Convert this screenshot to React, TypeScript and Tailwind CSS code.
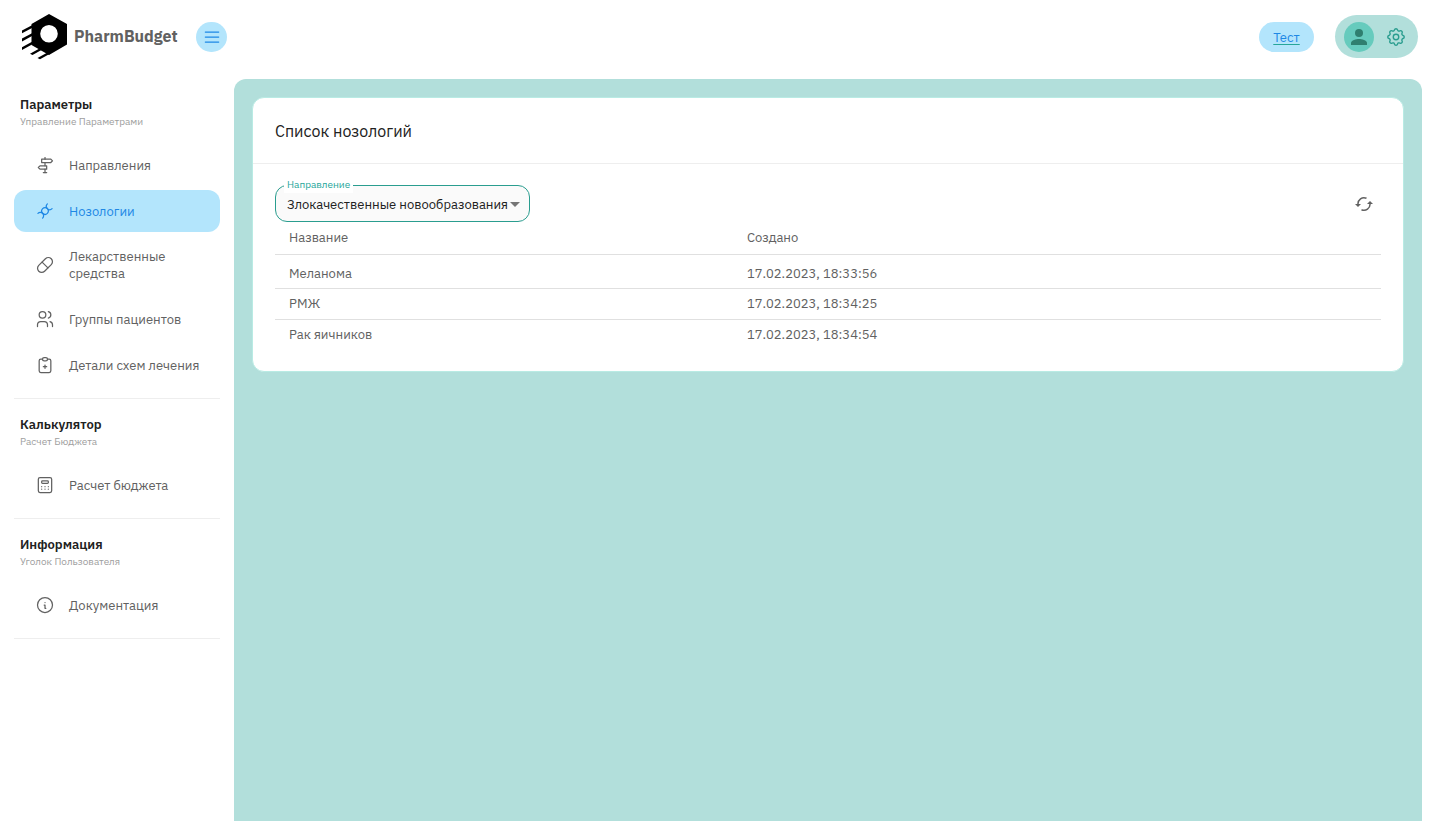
import React from 'react';
import {
    TbDirections,
    TbDna,
    TbPill,
    TbUsers,
    TbClipboardPlus,
    TbCalculator,
    TbInfoCircle,
    TbMenu2,
    TbSettings,
} from 'react-icons/tb';

type IconType = React.ComponentType<{className?: string; strokeWidth?: number}>;

interface NavItem {
    label: string;
    icon: IconType;
    active?: boolean;
}

interface NavGroup {
    title: string;
    caption: string;
    items: NavItem[];
}

const NAV_GROUPS: NavGroup[] = [
    {
        title: 'Параметры',
        caption: 'Управление Параметрами',
        items: [
            {label: 'Направления', icon: TbDirections},
            {label: 'Нозологии', icon: TbDna, active: true},
            {label: 'Лекарственные средства', icon: TbPill},
            {label: 'Группы пациентов', icon: TbUsers},
            {label: 'Детали схем лечения', icon: TbClipboardPlus},
        ],
    },
    {
        title: 'Калькулятор',
        caption: 'Расчет Бюджета',
        items: [{label: 'Расчет бюджета', icon: TbCalculator}],
    },
    {
        title: 'Информация',
        caption: 'Уголок Пользователя',
        items: [{label: 'Документация', icon: TbInfoCircle}],
    },
];

const ROWS = [
    {name: 'Меланома', created: '17.02.2023, 18:33:56'},
    {name: 'РМЖ', created: '17.02.2023, 18:34:25'},
    {name: 'Рак яичников', created: '17.02.2023, 18:34:54'},
];

function Logo() {
    return (
        <svg viewBox="0 0 46 46" className="h-[46px] w-[46px] shrink-0" fill="#000">
            <path fillRule="evenodd" d="M27 0 L45 10 V30.5 L27 41 L9.5 31 V10 Z M27 11 a8.8 8.8 0 1 0 0 17.6 a8.8 8.8 0 1 0 0 -17.6 Z"/>
            <path d="M0 16.4 L10 11.2 V13.9 L0 19.2 Z"/>
            <path d="M0 24.6 L10 19.2 V22 L0 27.4 Z"/>
            <path d="M0 33.2 L10 27.8 V30.6 L0 36 Z"/>
            <path d="M8 39.8 L17 34.8 L19.5 36 L10.500 41 Z"/>
            <path d="M15.500 44 L25 38.800 L27.500 40 L18 45.200 Z"/>
        </svg>
    );
}

function Header() {
    return (
        <header className="flex h-[79px] items-start justify-between px-[22px]">
            <div className="flex items-center pt-[14px]">
                <Logo/>
                <span className="ml-1.5 w-[122px] pb-0.5 text-base font-bold leading-6 text-[#616161]">PharmBudget</span>
                <button type="button" aria-label="Меню" className="flex h-[30px] w-[31px] items-center justify-center rounded-full bg-[#b3e5fc] text-[#1e88e5]">
                    <TbMenu2 className="h-5 w-5" strokeWidth={1.5}/>
                </button>
            </div>
            <div className="flex items-center gap-[21px] pt-[15px]">
                <a href="#" className="flex h-[30px] w-[55px] items-center justify-center rounded-full bg-[#b3e5fc] pt-0.5 text-[13px] text-[#1e88e5] underline decoration-[#26a69a] underline-offset-2">
                    Тест
                </a>
                <button type="button" aria-label="Профиль" className="flex h-[43px] w-[83px] items-center gap-[11px] rounded-full bg-[#b2dfdb] pl-[9px]">
                    <span className="flex h-[30px] w-[30px] items-center justify-center rounded-full bg-[#66cbbd]">
                        <svg viewBox="0 0 16 16" className="h-4 w-4" fill="#2f7f6f">
                            <circle cx="8" cy="4" r="4"/>
                            <path d="M0 16 V14 C0 11.3 5.3 10 8 10 S16 11.3 16 14 V16 Z"/>
                        </svg>
                    </span>
                    <TbSettings className="h-[22px] w-[22px] text-[#2a9d8f]" strokeWidth={1.5}/>
                </button>
            </div>
        </header>
    );
}

function Sidebar() {
    return (
        <nav className="w-[234px] shrink-0 px-[14px] pt-[17px]">
            {NAV_GROUPS.map((group) => (
                <section key={group.title} className="mb-[17px] border-b border-[#eeeeee] pb-3">
                    <h2 className="pl-1.5 text-[13px] font-semibold leading-[18px] text-[#212121]">{group.title}</h2>
                    <p className="pl-1.5 text-[10px] leading-4 text-[#9e9e9e]">{group.caption}</p>
                    <ul className="mt-3.5 flex flex-col gap-1">
                        {group.items.map(({label, icon: Icon, active}) => (
                            <li key={label}>
                                <a
                                    href="#"
                                    aria-current={active ? 'page' : undefined}
                                    className={`flex items-center rounded-xl py-[11px] pl-[21px] pr-5 text-[13px] leading-[17px] ${
                                        active ? 'bg-[#b3e5fc] text-[#1e88e5]' : 'text-[#616161]'
                                    }`}
                                >
                                    <Icon className="mr-3.5 h-5 w-5 shrink-0" strokeWidth={1.5}/>
                                    <span className="py-px">{label}</span>
                                </a>
                            </li>
                        ))}
                    </ul>
                </section>
            ))}
        </nav>
    );
}

function DirectionSelect() {
    return (
        <div className="relative w-[255px]">
            <label htmlFor="direction" className="absolute -top-2 left-[9px] bg-white px-[3px] text-[10px] leading-4 text-[#26a69a]">
                Направление
            </label>
            <select
                id="direction"
                className="block h-[37px] w-full appearance-none rounded-xl border border-[#2a9d8f] bg-[#fafafa] pl-[11px] pr-4 pt-0.5 text-[13px] text-[#212121]"
            >
                <option>Злокачественные новообразования</option>
            </select>
            <svg viewBox="0 0 10 5" className="pointer-events-none absolute right-2.5 top-[17px] h-[5px] w-[10px]" fill="#757575">
                <path d="M0 0 H10 L5 5 Z"/>
            </svg>
        </div>
    );
}

function RefreshIcon() {
    return (
        <svg viewBox="0 0 18 16" className="h-4 w-[18px]" fill="none" stroke="#616161" strokeWidth="1.5">
            <path d="M3 8.5 A6 6.2 0 0 1 11.5 2.3"/>
            <path d="M15 7.5 A6 6.2 0 0 1 6.5 13.7"/>
            <path d="M0 8 H6 L3 11 Z" fill="#616161" stroke="none"/>
            <path d="M12 8 L15 5 L18 8 Z" fill="#616161" stroke="none"/>
        </svg>
    );
}

export default function App() {
    return (
        <div className="flex min-h-screen flex-col bg-white font-['IBM_Plex_Sans','Noto_Sans',sans-serif]">
            <Header/>
            <div className="flex flex-1">
                <Sidebar/>
                <main className="mr-[18px] min-w-0 flex-1 rounded-t-xl bg-[#b2dfdb] p-[18px]">
                    <section className="rounded-xl border border-[#b9ebe4] bg-white">
                        <h1 className="border-b border-[#eeeeee] px-[22px] pb-[19px] pt-[21px] text-base leading-[25px] text-[#212121]">
                            Список нозологий
                        </h1>
                        <div className="px-[22px] py-[21px]">
                            <div className="flex items-center justify-between">
                                <DirectionSelect/>
                                <button type="button" aria-label="Обновить" className="mr-2">
                                    <RefreshIcon/>
                                </button>
                            </div>
                            <table className="w-full table-fixed text-left text-[13px] leading-[18px] text-[#616161]">
                                <thead>
                                    <tr className="border-b border-[#e0e0e0]">
                                        <th className="w-[41.4%] px-3.5 py-[7px] font-normal">Название</th>
                                        <th className="px-3.5 py-[7px] font-normal">Создано</th>
                                    </tr>
                                </thead>
                                <tbody>
                                    {ROWS.map((row) => (
                                        <tr key={row.name} className="group border-b border-[#e0e0e0] last:border-b-0">
                                            <td className="px-3.5 py-1.5 group-first:pb-[5px] group-first:pt-2.5">{row.name}</td>
                                            <td className="px-3.5 py-1.5 group-first:pb-[5px] group-first:pt-2.5">{row.created}</td>
                                        </tr>
                                    ))}
                                </tbody>
                            </table>
                        </div>
                    </section>
                </main>
            </div>
        </div>
    );
}
